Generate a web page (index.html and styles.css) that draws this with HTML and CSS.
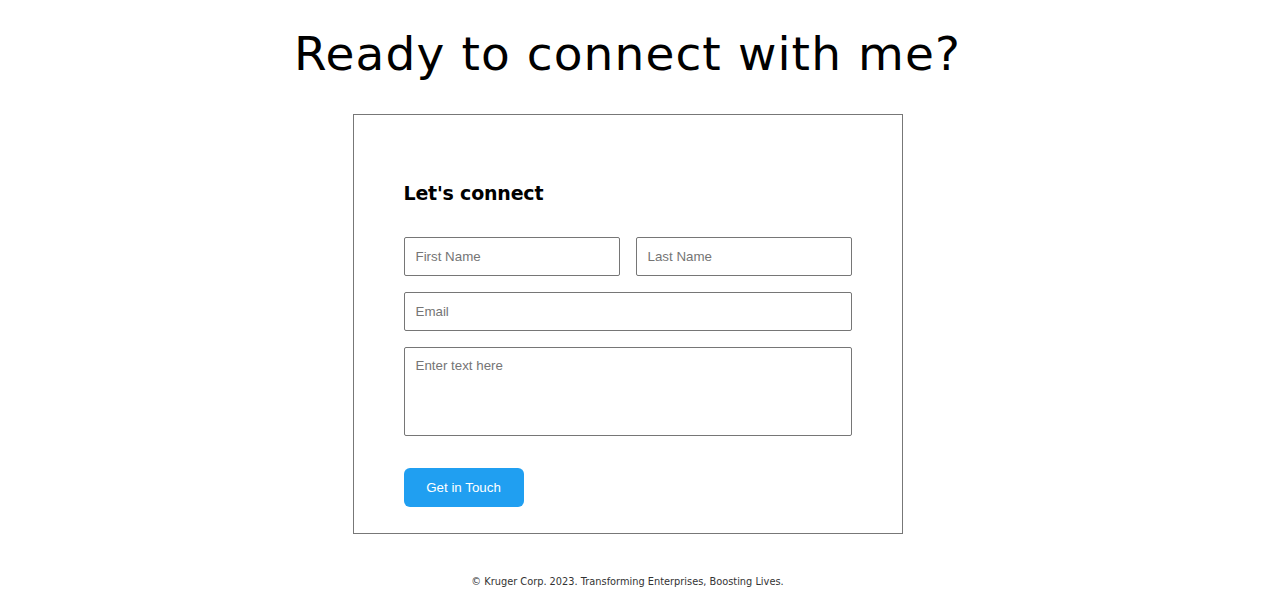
FILE: index.html
```html
<!DOCTYPE html>
<html>
<head>
<meta charset="utf-8">
<link rel="stylesheet" href="styles.css">
</head>
<body>
<div class="page">
  <h1 class="title">Ready to connect with me?</h1>
  <form class="card">
    <h3 class="card-title">Let's connect</h3>
    <div class="row">
      <input class="field" type="text" placeholder="First Name">
      <input class="field" type="text" placeholder="Last Name">
    </div>
    <input class="field" type="email" placeholder="Email">
    <textarea class="field area" placeholder="Enter text here"></textarea>
    <button class="btn" type="button">Get in Touch</button>
  </form>
  <p class="footer">© Kruger Corp. 2023. Transforming Enterprises, Boosting Lives.</p>
</div>
</body>
</html>
```
FILE: styles.css
```css
html, body { margin: 0; padding: 0; background: #fff; }
.page {
  width: 1255px;
  display: flex;
  flex-direction: column;
  align-items: center;
}
.title {
  margin: 24px 0 0;
  font-family: "DejaVu Sans", sans-serif;
  font-weight: 400;
  font-size: 47px;
  line-height: 60px;
  color: #000;
  letter-spacing: 1.1px;
}
.card {
  box-sizing: border-box;
  width: 550px;
  margin-top: 30px;
  border: 1px solid #777;
  padding: 66px 50px 26px;
  display: flex;
  flex-direction: column;
  gap: 16px;
}
.card-title {
  margin: 0 0 16px;
  font-family: "DejaVu Sans", sans-serif;
  font-weight: 700;
  font-size: 19px;
  line-height: 24px;
  letter-spacing: -0.2px;
  color: #000;
}
.row { display: flex; gap: 16px; }
.row .field { flex: 1; min-width: 0; }
.field {
  box-sizing: border-box;
  height: 39px;
  border: 1px solid #767676;
  border-radius: 2px;
  padding: 0 11px 1px;
  font-family: "Liberation Sans", Arial, sans-serif;
  font-size: 13.333px;
  color: #333;
  outline: none;
  background: #fff;
}
.field::placeholder { color: #757575; }
.area {
  height: 89px;
  padding-top: 10px;
  resize: none;
}
.btn {
  margin-top: 16px;
  align-self: flex-start;
  width: 120px;
  height: 39px;
  border: none;
  border-radius: 6px;
  background: #209ff1;
  color: #fff;
  font-family: "Liberation Sans", Arial, sans-serif;
  font-size: 13.333px;
  cursor: pointer;
}
.footer {
  margin: 42px 0 0;
  font-family: "DejaVu Sans", sans-serif;
  font-size: 9.8px;
  color: #333;
}
```
